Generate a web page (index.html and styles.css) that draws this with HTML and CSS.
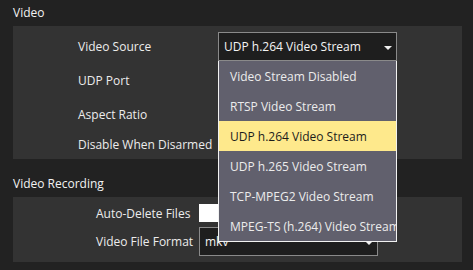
FILE: index.html
```html
<!DOCTYPE html>
<html lang="en">
<head>
    <meta charset="UTF-8">
    <title>Video Settings</title>
    <link rel="stylesheet" href="styles.css">
</head>
<body>
    <div class="page">
        <div class="section-title">Video</div>
        <div class="panel video-panel">
            <div class="label">Video Source</div>
            <div class="combo-wrap">
                <div class="combo">
                    <span>UDP h.264 Video Stream</span>
                    <span class="arrow"></span>
                </div>
                <!-- open popup of the source combo -->
                <ul class="popup">
                    <li>Video Stream Disabled</li>
                    <li>RTSP Video Stream</li>
                    <li class="current">UDP h.264 Video Stream</li>
                    <li>UDP h.265 Video Stream</li>
                    <li>TCP-MPEG2 Video Stream</li>
                    <li>MPEG-TS (h.264) Video Stream</li>
                </ul>
            </div>

            <div class="label">UDP Port</div>
            <div class="field"></div>

            <div class="label">Aspect Ratio</div>
            <div class="field"></div>

            <div class="label">Disable When Disarmed</div>
            <div class="check-row"><span class="check"></span></div>
        </div>

        <div class="section-title recording-title">Video Recording</div>
        <div class="panel recording-panel">
            <div class="label">Auto-Delete Files</div>
            <div class="check-row"><span class="check"></span></div>

            <div class="label">Video File Format</div>
            <div class="combo">
                <span>mkv</span>
                <span class="arrow"></span>
            </div>
        </div>
    </div>
</body>
</html>
```

FILE: styles.css
```css
* {
    margin: 0;
    padding: 0;
    box-sizing: border-box;
}
body {
    background: #222222;
    color: #ececec;
    font-family: "Open Sans", sans-serif;
    font-size: 12px;
}
.page {
    padding: 0 11px 0 13px;
}
.section-title {
    height: 26px;
    line-height: 26px;
    color: #f2f2f2;
}
.recording-title {
    margin-top: 12px;
}
.panel {
    background: #333333;
    display: grid;
    align-items: center;
}
.video-panel {
    grid-template-columns: 140px 179px;
    row-gap: 5px;
    padding: 6px 0 5px 65px;
    grid-template-rows: 29px 29px 29px 20px;
}
.recording-panel {
    grid-template-columns: 103px 179px;
    row-gap: 5px;
    padding: 7px 0 6px 83px;
    grid-template-rows: 18px 29px;
}
.label {
    white-space: nowrap;
}
.combo {
    height: 29px;
    background: #1e1e1e;
    border: 1px solid #8a8a8a;
    display: flex;
    align-items: center;
    justify-content: space-between;
    padding: 0 4px 0 5px;
    color: #f4f4f4;
}
.arrow {
    width: 0;
    height: 0;
    border-left: 4px solid transparent;
    border-right: 4px solid transparent;
    border-top: 4px solid #f0f0f0;
    margin-top: 2px;
}
.combo-wrap {
    position: relative;
}
.field {
    height: 29px;
    background: #ffffff;
}
.check-row {
    display: flex;
    align-items: center;
    height: 100%;
}
.check {
    width: 20px;
    height: 18px;
    background: #ffffff;
}
.popup {
    position: absolute;
    top: 100%;
    left: 0;
    width: 179px;
    list-style: none;
    background: #61606d;
    border: 1px solid #f2f2f2;
    border-top-width: 0;
    overflow: hidden;
    z-index: 2;
}
.popup li {
    height: 30px;
    line-height: 29px;
    padding: 1px 0 0 11px;
    white-space: nowrap;
    color: #ececec;
}
.popup li.current {
    background: #fee98c;
    color: #1c1c1c;
}
```
